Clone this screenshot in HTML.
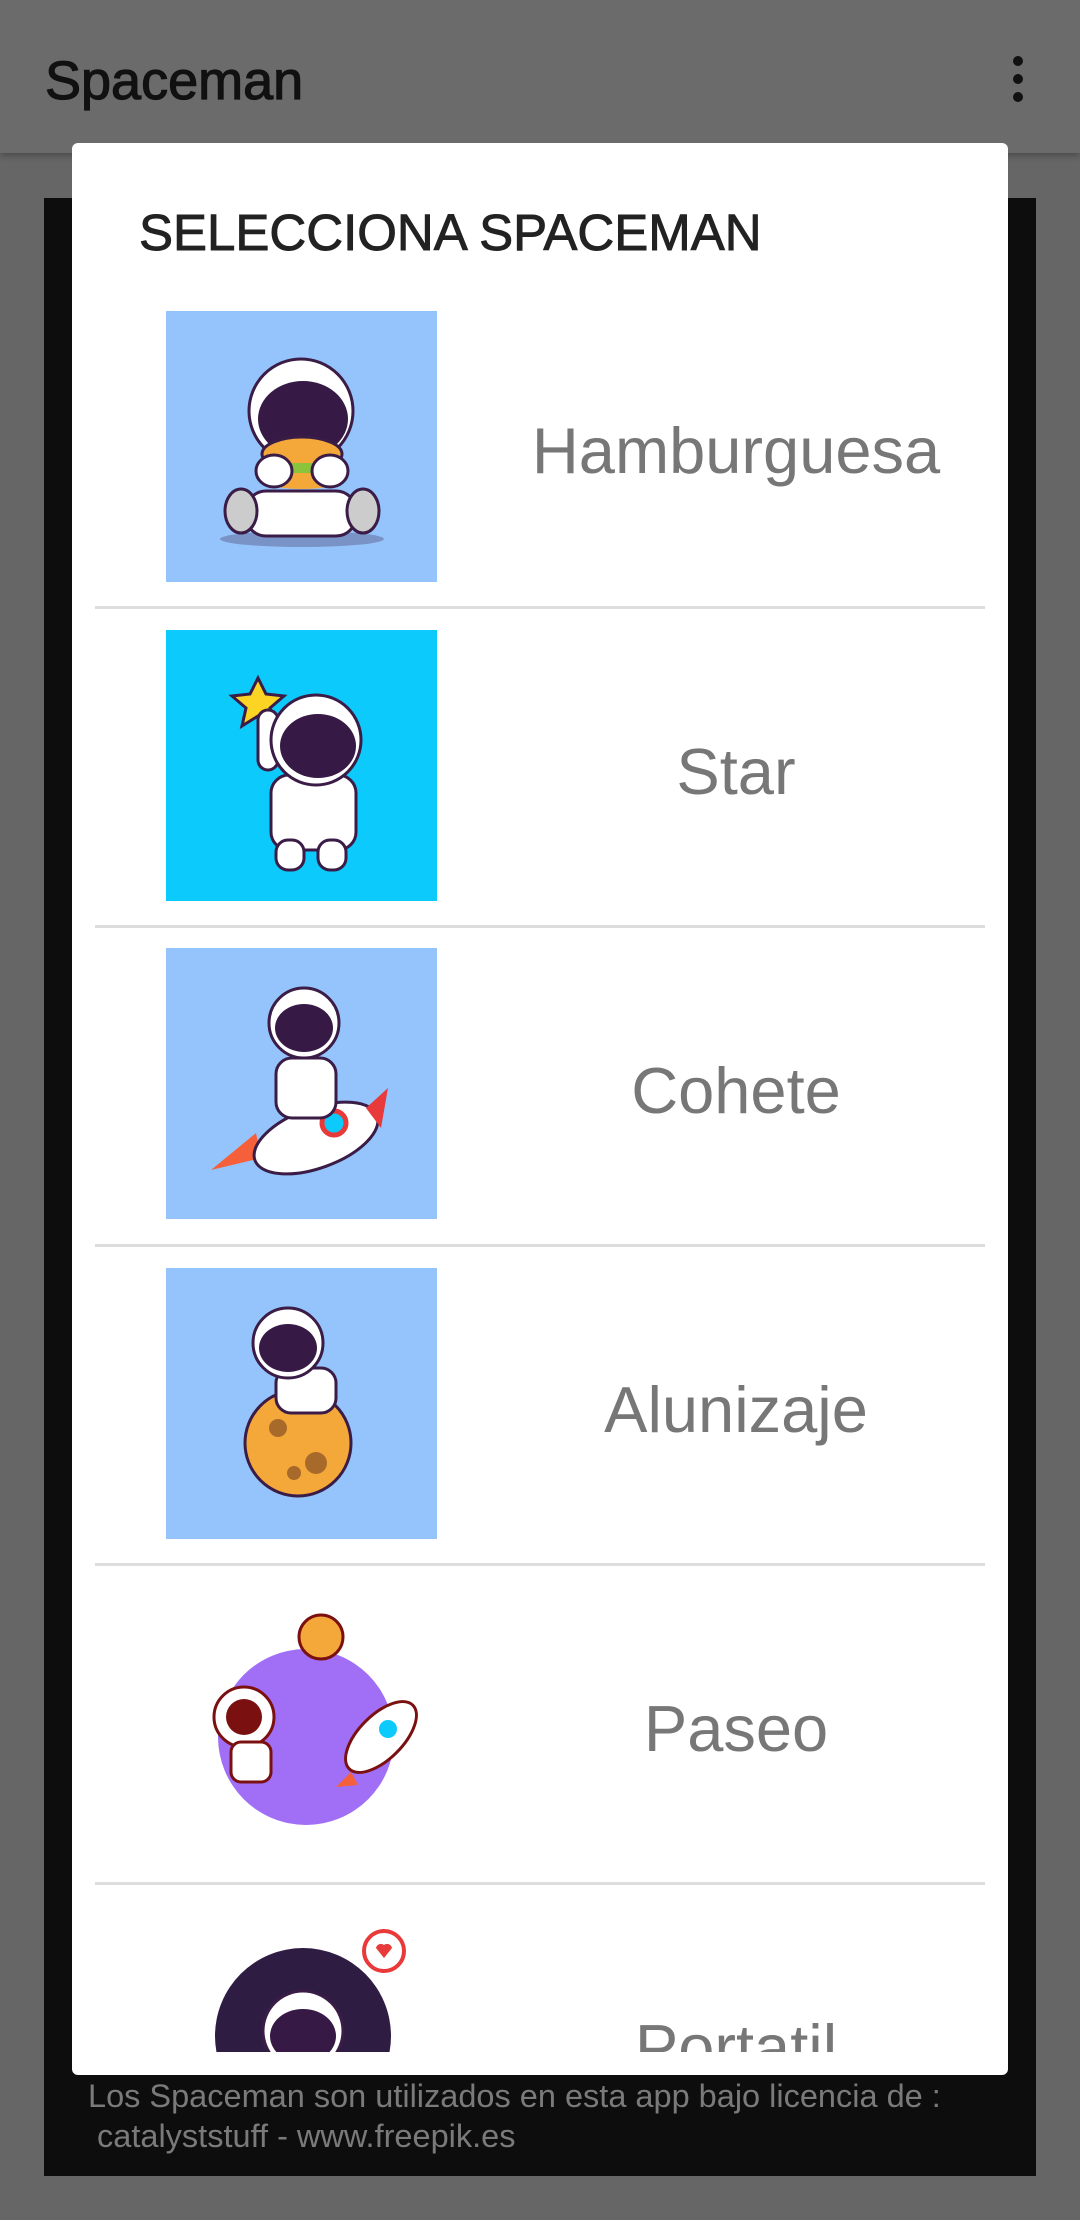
<!DOCTYPE html>
<html><head><meta charset="utf-8"><style>
*{margin:0;padding:0;box-sizing:border-box}
body{width:1080px;height:2220px;background:#666;position:relative;overflow:hidden;font-family:"Liberation Sans",sans-serif}
.bar{position:absolute;left:0;top:0;width:1080px;height:153px;background:#6b6b6b;box-shadow:0 3px 6px rgba(0,0,0,.25)}
.bar .t{position:absolute;left:45px;top:50px;font-size:54px;color:#111;-webkit-text-stroke:1.2px #111}
.dots{position:absolute;left:1013px;top:56px}
.dots i{display:block;width:10px;height:10px;border-radius:5px;background:#111;margin-bottom:8px}
.panel{position:absolute;left:44px;top:198px;width:992px;height:1978px;background:#0d0d0d}
.lic{position:absolute;left:88px;top:2076px;font-size:32.5px;color:#7a7a7a;line-height:40px}
.dlg{position:absolute;left:72px;top:143px;width:936px;height:1932px;background:#fff;border-radius:6px;overflow:hidden}
.dlg h1{position:absolute;left:67px;top:60px;font-size:51px;font-weight:normal;color:#222;-webkit-text-stroke:0.9px #222}
.list{position:absolute;left:0;top:0;width:936px;height:1909px;overflow:hidden}
.row{position:absolute;left:23px;width:890px;height:319px;border-bottom:3px solid #ddd}
.img{position:absolute;left:71px;top:0;width:271px;height:271px}
.lbl{position:absolute;left:367px;width:548px;text-align:center;font-size:65px;color:#777;top:125px}
</style></head><body>
<div class="bar"><div class="t">Spaceman</div><div class="dots"><i></i><i></i><i></i></div></div>
<div class="panel"></div>
<div class="lic">Los Spaceman son utilizados en esta app bajo licencia de :<br>&nbsp;catalyststuff - www.freepik.es</div>
<div class="dlg">
<h1>SELECCIONA SPACEMAN</h1>
<div class="list">
<div class="row" style="top:145px;height:321px"><div class="img" style="top:23px;background:#94c4fb">
<svg width="271" height="271" viewBox="0 0 271 271"><ellipse cx="136" cy="228" rx="82" ry="8" fill="#7a93c6"/><rect x="80" y="180" width="110" height="45" rx="20" fill="#fff" stroke="#3a1c46" stroke-width="3"/><ellipse cx="75" cy="200" rx="16" ry="22" fill="#ccc" stroke="#3a1c46" stroke-width="3"/><ellipse cx="197" cy="200" rx="16" ry="22" fill="#ccc" stroke="#3a1c46" stroke-width="3"/><circle cx="135" cy="100" r="52" fill="#fff" stroke="#3a1c46" stroke-width="3"/><ellipse cx="137" cy="108" rx="45" ry="38" fill="#361a45"/><ellipse cx="136" cy="143" rx="40" ry="17" fill="#f5a83a" stroke="#3a1c46" stroke-width="3"/><rect x="100" y="152" width="72" height="14" fill="#8ac43c"/><ellipse cx="136" cy="170" rx="38" ry="8" fill="#f5a83a"/><ellipse cx="108" cy="160" rx="18" ry="16" fill="#fff" stroke="#3a1c46" stroke-width="3"/><ellipse cx="164" cy="160" rx="18" ry="16" fill="#fff" stroke="#3a1c46" stroke-width="3"/></svg></div><div class="lbl">Hamburguesa</div></div>
<div class="row" style="top:466px"><div class="img" style="top:21px;background:#0dcafd">
<svg width="271" height="271" viewBox="0 0 271 271"><polygon points="92,48 100,64 118,66 104,78 108,96 92,86 76,96 80,78 66,66 84,64" fill="#fcd424" stroke="#3a1c46" stroke-width="3"/><rect x="92" y="80" width="20" height="60" rx="10" fill="#fff" stroke="#3a1c46" stroke-width="3"/><rect x="105" y="145" width="85" height="75" rx="18" fill="#fff" stroke="#3a1c46" stroke-width="3"/><rect x="110" y="210" width="28" height="30" rx="12" fill="#fff" stroke="#3a1c46" stroke-width="3"/><rect x="152" y="210" width="28" height="30" rx="12" fill="#fff" stroke="#3a1c46" stroke-width="3"/><circle cx="150" cy="110" r="45" fill="#fff" stroke="#3a1c46" stroke-width="3"/><ellipse cx="152" cy="116" rx="38" ry="32" fill="#361a45"/></svg></div><div class="lbl">Star</div></div>
<div class="row" style="top:785px"><div class="img" style="top:20px;background:#94c4fb">
<svg width="271" height="271" viewBox="0 0 271 271"><polygon points="45,222 90,185 95,210" fill="#f5603a"/><ellipse cx="150" cy="190" rx="65" ry="30" fill="#fff" stroke="#3a1c46" stroke-width="3" transform="rotate(-20 150 190)"/><path d="M200 160 L222 140 L215 180Z" fill="#e83a3a"/><circle cx="168" cy="175" r="12" fill="#0dcafd" stroke="#e83a3a" stroke-width="5"/><rect x="110" y="110" width="60" height="60" rx="16" fill="#fff" stroke="#3a1c46" stroke-width="3"/><circle cx="138" cy="75" r="35" fill="#fff" stroke="#3a1c46" stroke-width="3"/><ellipse cx="138" cy="80" rx="29" ry="24" fill="#361a45"/></svg></div><div class="lbl">Cohete</div></div>
<div class="row" style="top:1104px"><div class="img" style="top:21px;background:#94c4fb">
<svg width="271" height="271" viewBox="0 0 271 271"><circle cx="132" cy="175" r="53" fill="#f5a83a" stroke="#3a1c46" stroke-width="3"/><circle cx="112" cy="160" r="9" fill="#a86a2a"/><circle cx="150" cy="195" r="11" fill="#a86a2a"/><circle cx="128" cy="205" r="7" fill="#a86a2a"/><rect x="110" y="100" width="60" height="45" rx="15" fill="#fff" stroke="#3a1c46" stroke-width="3"/><circle cx="122" cy="75" r="35" fill="#fff" stroke="#3a1c46" stroke-width="3"/><ellipse cx="122" cy="80" rx="29" ry="24" fill="#361a45"/></svg></div><div class="lbl">Alunizaje</div></div>
<div class="row" style="top:1423px"><div class="img" style="top:21px">
<svg width="271" height="271" viewBox="0 0 271 271"><circle cx="140" cy="150" r="88" fill="#a06ff5"/><circle cx="155" cy="50" r="22" fill="#f5a83a" stroke="#7a1010" stroke-width="3"/><circle cx="78" cy="130" r="30" fill="#fff" stroke="#7a1010" stroke-width="3"/><circle cx="78" cy="130" r="18" fill="#7a1010"/><rect x="65" y="155" width="40" height="40" rx="10" fill="#fff" stroke="#7a1010" stroke-width="3"/><ellipse cx="215" cy="150" rx="22" ry="45" fill="#fff" stroke="#7a1010" stroke-width="3" transform="rotate(45 215 150)"/><circle cx="222" cy="142" r="9" fill="#0dcafd"/><path d="M170 200 L185 185 L192 198Z" fill="#f5603a"/></svg></div><div class="lbl">Paseo</div></div>
<div class="row" style="top:1742px;border:none"><div class="img" style="top:21px">
<svg width="271" height="271" viewBox="0 0 271 271"><circle cx="137" cy="130" r="88" fill="#2e1c42"/><circle cx="137" cy="125" r="40" fill="#fff" stroke="#3a1c46" stroke-width="3"/><ellipse cx="137" cy="130" rx="33" ry="27" fill="#361a45"/><circle cx="218" cy="45" r="20" fill="#fff" stroke="#e83a3a" stroke-width="4"/><path d="M210 42 a5 5 0 0 1 8 -3 a5 5 0 0 1 8 3 l-8 10z" fill="#e83a3a"/></svg></div><div class="lbl">Portatil</div></div>
</div>
</div>
</body></html>
